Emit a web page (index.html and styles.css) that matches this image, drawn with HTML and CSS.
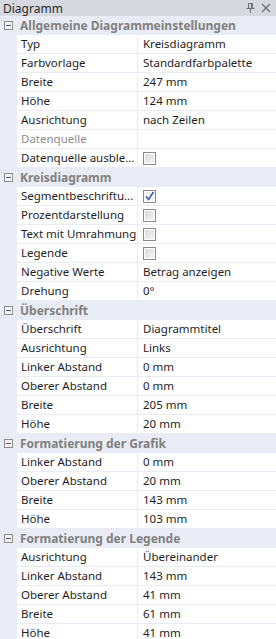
FILE: index.html
```html
<!DOCTYPE html>
<html lang="de">
<head>
  <meta charset="UTF-8">
  <title>Diagramm</title>
  <link rel="stylesheet" href="styles.css">
</head>
<body>
  <div class="panel">
    <div class="titlebar">
      <span class="title">Diagramm</span>
      <span class="tools">
        <svg width="9" height="10" viewBox="0 0 9 10"><path d="M2 0.5h5M2.5 0.5v5M6.5 0.5v5M5.5 1v4.5M0.5 5.5h8M4.5 5.5v4.5" stroke="#6d7179" stroke-width="1" fill="none"/></svg>
        <svg width="10" height="10" viewBox="0 0 10 10"><path d="M1 1l8 8M9 1l-8 8" stroke="#6d7179" stroke-width="1.3" fill="none"/></svg>
      </span>
    </div>

    <div class="section">
      <div class="head"><span class="toggle"></span>Allgemeine Diagrammeinstellungen</div>
      <div class="row"><div class="name">Typ</div><div class="value">Kreisdiagramm</div></div>
      <div class="row"><div class="name">Farbvorlage</div><div class="value">Standardfarbpalette</div></div>
      <div class="row"><div class="name">Breite</div><div class="value">247 mm</div></div>
      <div class="row"><div class="name">Höhe</div><div class="value">124 mm</div></div>
      <div class="row"><div class="name">Ausrichtung</div><div class="value">nach Zeilen</div></div>
      <div class="row"><div class="name disabled">Datenquelle</div><div class="value"></div></div>
      <div class="row"><div class="name">Datenquelle ausble...</div><div class="value"><span class="check"></span></div></div>
    </div>

    <div class="section">
      <div class="head"><span class="toggle"></span>Kreisdiagramm</div>
      <div class="row"><div class="name">Segmentbeschriftu...</div><div class="value"><span class="check on"><svg width="11" height="11" viewBox="0 0 11 11"><path d="M2 5.5l2.5 3L9.5 1" stroke="#3d5fa3" stroke-width="1.6" fill="none"/></svg></span></div></div>
      <div class="row"><div class="name">Prozentdarstellung</div><div class="value"><span class="check"></span></div></div>
      <div class="row"><div class="name">Text mit Umrahmung</div><div class="value"><span class="check"></span></div></div>
      <div class="row"><div class="name">Legende</div><div class="value"><span class="check"></span></div></div>
      <div class="row"><div class="name">Negative Werte</div><div class="value">Betrag anzeigen</div></div>
      <div class="row"><div class="name">Drehung</div><div class="value">0°</div></div>
    </div>

    <div class="section">
      <div class="head"><span class="toggle"></span>Überschrift</div>
      <div class="row"><div class="name">Überschrift</div><div class="value">Diagrammtitel</div></div>
      <div class="row"><div class="name">Ausrichtung</div><div class="value">Links</div></div>
      <div class="row"><div class="name">Linker Abstand</div><div class="value">0 mm</div></div>
      <div class="row"><div class="name">Oberer Abstand</div><div class="value">0 mm</div></div>
      <div class="row"><div class="name">Breite</div><div class="value">205 mm</div></div>
      <div class="row"><div class="name">Höhe</div><div class="value">20 mm</div></div>
    </div>

    <div class="section">
      <div class="head"><span class="toggle"></span>Formatierung der Grafik</div>
      <div class="row"><div class="name">Linker Abstand</div><div class="value">0 mm</div></div>
      <div class="row"><div class="name">Oberer Abstand</div><div class="value">20 mm</div></div>
      <div class="row"><div class="name">Breite</div><div class="value">143 mm</div></div>
      <div class="row"><div class="name">Höhe</div><div class="value">103 mm</div></div>
    </div>

    <div class="section">
      <div class="head"><span class="toggle"></span>Formatierung der Legende</div>
      <div class="row"><div class="name">Ausrichtung</div><div class="value">Übereinander</div></div>
      <div class="row"><div class="name">Linker Abstand</div><div class="value">143 mm</div></div>
      <div class="row"><div class="name">Oberer Abstand</div><div class="value">41 mm</div></div>
      <div class="row"><div class="name">Breite</div><div class="value">61 mm</div></div>
      <div class="row"><div class="name">Höhe</div><div class="value">41 mm</div></div>
    </div>
  </div>
</body>
</html>
```

FILE: styles.css
```css
body {
  margin: 0;
  font-family: "Noto Sans", "Open Sans", sans-serif;
  font-size: 11.5px;
  color: #1e1e1e;
  background: #e9ecf5;
  overflow: hidden;
}
.panel {
  width: 276px;
}
.titlebar {
  height: 16px;
  background: #d6d9e0;
  display: flex;
  align-items: center;
  justify-content: space-between;
  padding: 0 5px 0 3px;
  box-sizing: border-box;
  font-size: 12px;
}
.title {
  color: #2b2b2b;
}
.tools {
  display: flex;
  gap: 6px;
  align-items: center;
}
.head {
  height: 19px;
  display: flex;
  align-items: center;
  font-weight: bold;
  font-size: 12px;
  color: #808080;
  background: #e9ecf5;
}
.toggle {
  width: 9px;
  height: 9px;
  border: 1px solid #8d8d8d;
  box-sizing: border-box;
  margin: 0 7px 0 4px;
  position: relative;
  background: #f4f4f4;
}
.toggle::after {
  content: "";
  position: absolute;
  left: 1px;
  right: 1px;
  top: 3px;
  height: 1px;
  background: #555;
}
.row {
  display: flex;
  height: 18px;
  margin: 0 0 1px 17px;
}
.name {
  width: 120px;
  background: #fff;
  padding-left: 4px;
  box-sizing: border-box;
  line-height: 18px;
  white-space: nowrap;
  overflow: hidden;
}
.name.disabled {
  color: #8d8d8d;
}
.value {
  flex: 1;
  margin-left: 1px;
  background: #fff;
  padding-left: 5px;
  line-height: 18px;
  display: flex;
  align-items: center;
}
.check {
  width: 13px;
  height: 13px;
  border: 1px solid #8a8a8a;
  box-sizing: border-box;
  background: linear-gradient(135deg, #d8d8d8, #f6f6f6);
  box-shadow: inset 0 0 0 1px #fff;
  display: flex;
  align-items: center;
  justify-content: center;
}
.check.on {
  background: #f3f3f3;
}
```
